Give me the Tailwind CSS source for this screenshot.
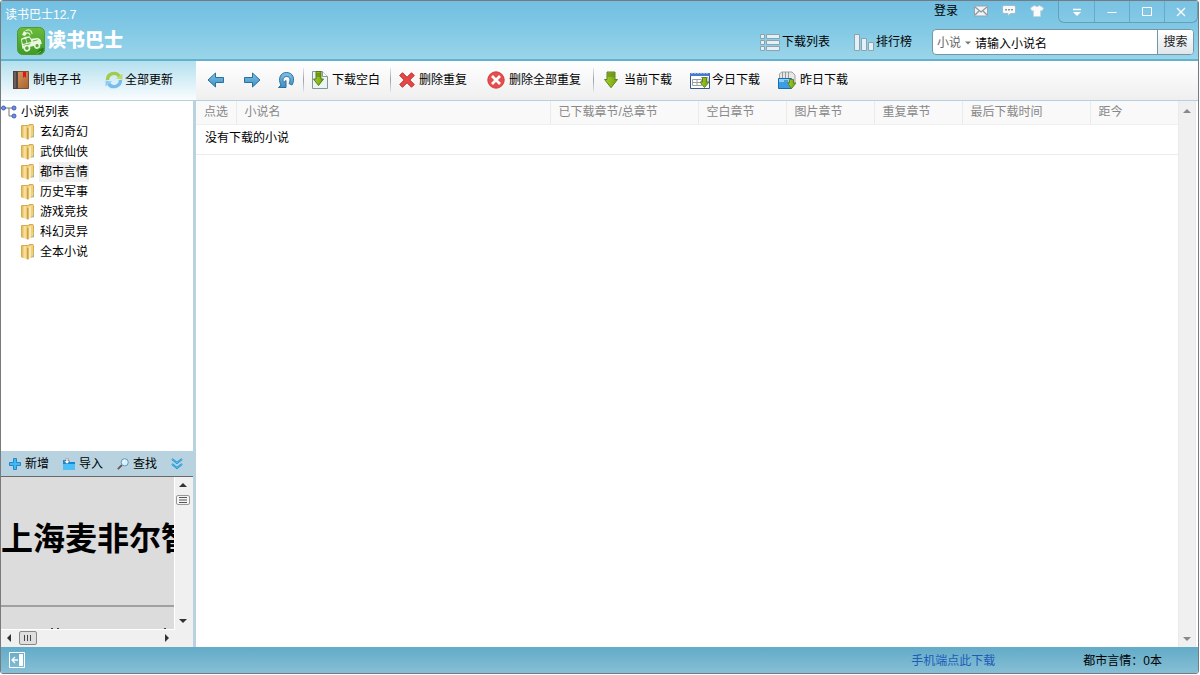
<!DOCTYPE html>
<html lang="zh-CN">
<head>
<meta charset="utf-8">
<title>读书巴士12.7</title>
<script src="https://cdn.jsdelivr.net/npm/@tailwindcss/browser@4"></script>
</head>
<body class="h-screen overflow-hidden bg-white pr-px pb-px font-['Liberation_Sans','Noto_Sans_CJK_SC',sans-serif] text-xs leading-4 text-black">
<!-- shared symbols -->
<svg class="absolute size-0" aria-hidden="true">
  <defs>
    <linearGradient id="blue" x1="0" y1="0" x2="0" y2="1"><stop offset="0" stop-color="#7cc4e6"/><stop offset="1" stop-color="#3f8fc4"/></linearGradient>
    <linearGradient id="green" x1="0" y1="0" x2="1" y2="0"><stop offset="0" stop-color="#a6d02c"/><stop offset="1" stop-color="#74a008"/></linearGradient>
    <linearGradient id="gold" x1="0" y1="0" x2="1" y2="0"><stop offset="0" stop-color="#e3b95e"/><stop offset=".5" stop-color="#fbe7a5"/><stop offset="1" stop-color="#dfb04e"/></linearGradient>
    <linearGradient id="leather" x1="0" y1="0" x2="1" y2="1"><stop offset="0" stop-color="#d9a067"/><stop offset="1" stop-color="#a9622f"/></linearGradient>
    <linearGradient id="logo" x1="0" y1="0" x2="0" y2="1"><stop offset="0" stop-color="#6cbb3a"/><stop offset="1" stop-color="#3f9a27"/></linearGradient>
    <symbol id="folder" viewBox="0 0 14 16">
      <path d="M.5 1.500h7l.5-1h4l.5 1v11.500h-12z" fill="#efd080" stroke="#d6ab50"/>
      <path d="M1 2h4l2 2v11.500l-6-2z" fill="url(#gold)"/>
      <path d="M7 4l3-2v11l-3 2.500z" fill="#fbe9b0"/>
      <path d="M7 4v11.500" stroke="#b88a2c"/>
      <path d="M12.500 8v5" stroke="#e0b558"/><path d="M12 11h1v2h-1z" fill="#55bfe8"/>
    </symbol>
    <symbol id="down" viewBox="0 0 14 17"><path d="M3 .5h8V8h2.500L7 16.200.5 8H3z" fill="url(#green)" stroke="#5d8420"/><path d="M3.500 2.500h7M3.500 4.500h7" stroke="#5d8420"/></symbol>
  </defs>
</svg>

<div class="flex h-full flex-col overflow-hidden rounded-[3px] border border-[#777b80] bg-white">
  <header class="flex h-15 shrink-0 justify-between border-b-2 border-[#62b1cf] bg-linear-to-b from-[#72bfe2] via-[#82c9e5] to-[#9ad5e9]">
    <div class="flex flex-col pt-1.5 pl-1">
      <h1 class="text-white">读书巴士12.7</h1>
      <div class="flex items-center gap-0.5 pt-1 pl-3">
        <svg class="size-7" viewBox="0 0 28 28"><rect x=".5" y=".5" width="27" height="27" rx="5" fill="url(#logo)" stroke="#4a9c31"/>
          <g fill="none" stroke="#d5efc6" stroke-width="1.200" stroke-linecap="round"><path d="M9 3.500q5-2 6 3M9.500 6q3-.5 3.500 2"/></g>
          <path d="M7 4l3 2-2 3-3-1z" fill="#e9f7df"/>
          <g transform="rotate(-14 14 15)"><path d="M5 9.500q4-1.500 9-.5l1 3 6 .5q3 1 3 4v3H4z" fill="#e9f7df"/>
          <path d="M6 11h3v3.500H6zM10.500 10.800h2.800l.8 3.700h-3.600zM6 16.500h7M16 14.500h5" fill="#55a936" stroke="#55a936" stroke-width=".8"/>
          <circle cx="8.500" cy="20" r="2.600" fill="#55a936" stroke="#e9f7df" stroke-width="1.600"/><circle cx="19" cy="20" r="2.400" fill="#55a936" stroke="#e9f7df" stroke-width="1.600"/></g>
          <path d="M20 27q1-6 7-6-1 6-7 6z" fill="#277c1c"/><path d="M20 27l4-3" stroke="#7cc95a"/></svg>
        <span class="text-[19px] leading-7 font-black text-white">读书巴士</span>
      </div>
    </div>
    <div class="flex flex-col items-end gap-1.5">
      <div class="flex items-start">
        <div class="flex h-5 items-center gap-3.5 pr-3.5">
          <a href="#" class="pr-0.5">登录</a>
          <button aria-label="消息"><svg class="h-3 w-3.5" viewBox="0 0 14 12"><path d="M.5 1h13v10H.5z" fill="#f1f3f4" stroke="#91a6b0"/><path d="M1 2l6 5 6-5M1 10l4-4M13 10L9 6" fill="none" stroke="#8c9aa3" stroke-width="1.300"/></svg></button>
          <button aria-label="反馈"><svg class="h-3 w-3.5" viewBox="0 0 14 12"><path d="M2 .5h10q1.500 0 1.500 1.500v5q0 1.500-1.500 1.500H8.500L6 11.500V8.500H2Q.5 8.500.5 7V2Q.5.5 2 .5z" fill="#f7fafb" stroke="#a5bbc6"/><path d="M3 4h2v1.500H3zM6 4h2v1.500H6zM9 4h2v1.500H9z" fill="#8499a4"/></svg></button>
          <button aria-label="皮肤"><svg class="h-3 w-3.5" viewBox="0 0 14 12"><path d="M4.500.5Q7 3 9.500.5L13.500 3 12 6l-1.500-.5v6h-7v-6L2 6 .5 3z" fill="#fafafa" stroke="#c5d3da" stroke-width=".7"/></svg></button>
        </div>
        <div class="flex h-5.5 divide-x divide-[#68a9c6] overflow-hidden rounded-b-md border border-t-0 border-[#65a0b9] bg-white/5 text-white">
          <button class="flex w-9 items-center justify-center" aria-label="菜单"><svg class="h-3 w-3" viewBox="0 0 12 12"><path d="M2 3.500h8" stroke="#fff" stroke-width="1.500"/><path d="M2 6h8l-4 4z" fill="#fff"/></svg></button>
          <button class="flex w-[35px] items-center justify-center" aria-label="最小化"><svg class="h-3 w-3" viewBox="0 0 12 12"><path d="M1.500 6.500h9" stroke="#fff"/></svg></button>
          <button class="flex w-[35px] items-center justify-center" aria-label="最大化"><svg class="h-3 w-3" viewBox="0 0 12 12"><path d="M1.500 1.500h9v8h-9z" fill="none" stroke="#fff"/></svg></button>
          <button class="flex w-8 items-center justify-center" aria-label="关闭"><svg class="h-3 w-3" viewBox="0 0 12 12"><path d="M2 2l8 8M10 2l-8 8" stroke="#fff" stroke-width="1.300"/></svg></button>
        </div>
      </div>
      <div class="flex items-center pr-1">
        <button class="flex items-center gap-0.5"><svg class="h-4.5 w-5" viewBox="0 0 20 18"><g fill="#e3f0f5" stroke="#8aa3ae"><path d="M.5 1.500h4v4h-4zM6.500 1.500h13v4h-13zM.5 7.500h4v4h-4zM6.500 7.500h13v4h-13zM.5 13.500h4v4h-4zM6.500 13.500h13v4h-13z"/></g></svg><span>下载列表</span></button>
        <button class="flex items-center gap-0.5 pl-6"><svg class="h-4.5 w-5" viewBox="0 0 20 18"><g fill="#e3f0f5" stroke="#8aa3ae"><path d="M.5 1.500h5v16h-5zM7.500 5.500h5v12h-5zM14.500 9.500h5v8h-5z"/></g></svg><span>排行榜</span></button>
        <form class="ml-5 flex h-6.5 overflow-hidden rounded border border-[#7397a6] bg-white">
          <div class="flex items-center pt-0.5 pl-1">
            <select aria-label="类别" class="h-5 w-7 appearance-none bg-transparent text-[#666]"><option>小说</option></select>
            <svg class="h-1 w-1.5" viewBox="0 0 6 4"><path d="M0 .5h6l-3 3z" fill="#777"/></svg>
          </div>
          <input aria-label="小说名" value="请输入小说名" class="ml-1 w-45.5 bg-transparent pt-1 outline-none">
          <button type="button" class="w-9 border-l border-[#7397a6] bg-linear-to-b from-white to-[#dfe6eb] text-[#222]">搜索</button>
        </form>
      </div>
    </div>
  </header>

  <nav class="flex h-10 shrink-0 border-b border-[#b5d0df]">
    <div class="flex w-[195px] shrink-0 items-center bg-linear-to-b from-[#b3e0ee] to-[#fafdff] pb-0.5 pl-3">
      <button class="flex items-center gap-1"><svg class="h-4.5 w-4" viewBox="0 0 16 18"><path d="M.5.5h15v17H.5z" fill="url(#leather)" stroke="#80502c"/><path d="M0 0h5v18H0z" fill="#51443f"/><path d="M2 1v16" stroke="#8c7d75"/><path d="M10 1h3v6l-1.500-1.500L10 7z" fill="#e0161c"/></svg><span>制电子书</span></button>
      <button class="ml-6 flex items-center gap-0.5"><svg class="h-4.5 w-4.5" viewBox="0 0 18 18"><g fill="none" stroke-width="3.400"><path d="M2.500 9A6.500 6.500 0 0 1 14.500 5.500" stroke="#a3ca48"/><path d="M15.500 9A6.500 6.500 0 0 1 3.500 12.500" stroke="#78bcef"/></g><path d="M11 7.500l6.500-5v6z" fill="#b9dc70"/><path d="M7 10.500l-6.500 5v-6z" fill="#8fcbf5"/></svg><span>全部更新</span></button>
    </div>
    <div class="flex min-w-0 grow items-center bg-linear-to-b from-white to-[#efefef] pb-0.5 pl-[11px]">
      <button aria-label="后退"><svg class="h-4.5 w-4.5" viewBox="0 0 18 18"><path d="M8.500 2v4.500h8v5h-8V16L1 9z" fill="url(#blue)" stroke="#2b6f9f"/></svg></button>
      <button class="ml-4.5" aria-label="前进"><svg class="h-4.5 w-4.5" viewBox="0 0 18 18"><path d="M9.500 2v4.500h-8v5h8V16L17 9z" fill="url(#blue)" stroke="#2b6f9f"/></svg></button>
      <button class="ml-4" aria-label="刷新"><svg class="h-4.5 w-4.5" viewBox="0 0 18 18"><path d="M1.500 16.500h7.500V9.500L6.800 11.500C5 8.500 6.500 5.500 9.500 5.500c3.500 0 4.500 3.500 2.500 7l3 1.500C18.500 8 16 1.500 9.500 1.500 3 1.500.8 8.500 4 14z" fill="url(#blue)" stroke="#2b6f9f"/></svg></button>
      <span class="ml-2 h-6 w-px bg-linear-to-b from-gray-200 via-gray-400 to-gray-200"></span>
      <button class="ml-2 flex items-center gap-1"><svg class="h-4.5 w-4" viewBox="0 0 16 18"><path d="M.5.5h10l5 5v12H.5z" fill="#edf4f4" stroke="#7e9a9b"/><path d="M10.500.5v5h5" fill="#fff" stroke="#7e9a9b"/><path d="M4 .5h5V8h2.500l-5 6.500L1.500 8H4z" fill="url(#green)" stroke="#557b16"/><path d="M4 3h5M4 5h5" stroke="#557b16"/></svg><span>下载空白</span></button>
      <span class="ml-2.5 h-6 w-px bg-linear-to-b from-gray-200 via-gray-400 to-gray-200"></span>
      <button class="ml-2 flex items-center gap-1"><svg class="size-4" viewBox="0 0 16 16"><path d="M3.500.7L8 5.200 12.500.7l2.800 2.800L10.800 8l4.500 4.500-2.800 2.800L8 10.800l-4.500 4.500L.7 12.500 5.200 8 .7 3.500z" fill="#e14848" stroke="#c53335" stroke-linejoin="round"/></svg><span>删除重复</span></button>
      <button class="ml-5 flex items-center gap-1"><svg class="size-4.5" viewBox="0 0 18 18"><circle cx="9" cy="9" r="8.200" fill="#e64e4e" stroke="#cc4444"/><path d="M5 5l8 8M13 5l-8 8" stroke="#fff" stroke-width="2.600"/></svg><span>删除全部重复</span></button>
      <span class="ml-3 h-6 w-px bg-linear-to-b from-gray-200 via-gray-400 to-gray-200"></span>
      <button class="ml-2.5 flex items-center gap-1.5"><svg class="h-4.5 w-3.5"><use href="#down"/></svg><span>当前下载</span></button>
      <button class="ml-4.5 flex items-center gap-0.5"><svg class="h-4.5 w-5" viewBox="0 0 20 18"><path d="M.5 2.500h19v15H.5z" fill="#fff" stroke="#35598f"/><path d="M0 2h20v3H0z" fill="#4678cb"/><path d="M2 1v2M5 1v2M8 1v2M11 1v2M14 1v2M17 1v2" stroke="#dfe9f6"/><path d="M2.500 8.500h9v6h-9zM2.500 11.500h9M7 8.500v6M11 6.500h7v5" fill="none" stroke="#9aa1a6"/><path d="M12.500 6.500h4V11h2.500l-4.500 5.500L10 11h2.500z" fill="url(#green)" stroke="#5d8420"/></svg><span>今日下载</span></button>
      <button class="ml-4.5 flex items-center gap-1"><svg class="h-4.5 w-4.5" viewBox="0 0 18 18"><path d="M1.500 8V3l2-2H14l3 3v9H1.500z" fill="#e7e7e7" stroke="#a3a3a3"/><path d="M4.500 1v6M7.500 1v6M10.500 1v6" stroke="#999"/><path d="M.5 7.500h13v10H.5z" fill="#3b9de4" stroke="#176bb0"/><path d="M1 8h13v3H1z" fill="#8dd0fa"/><path d="M6 10h4" stroke="#176bb0"/><path d="M11.500 8.500h4V12H18l-4.500 5.500L9.500 12h2z" fill="url(#green)" stroke="#5d8420"/></svg><span>昨日下载</span></button>
    </div>
  </nav>

  <div class="flex min-h-0 grow">
    <aside class="flex w-[195px] shrink-0 flex-col border-r-3 border-[#b8d3df]">
      <div class="min-h-0 grow pt-0.5">
        <div class="flex items-center gap-1 leading-4.5"><svg class="h-3.5 w-4" viewBox="0 0 16 14"><path d="M4 3h8M8 3v8h4" fill="none" stroke="#777"/><g fill="#7292df" stroke="#3f5db5"><circle cx="2.500" cy="3" r="2"/><circle cx="13" cy="3" r="2"/><circle cx="13" cy="11" r="2"/></g></svg><span>小说列表</span></div>
        <ul class="pt-px pl-5 leading-5">
          <li><a href="#" class="flex items-center gap-1"><svg class="h-4 w-3.5"><use href="#folder"/></svg><span class="px-px">玄幻奇幻</span></a></li>
          <li><a href="#" class="flex items-center gap-1"><svg class="h-4 w-3.5"><use href="#folder"/></svg><span class="px-px">武侠仙侠</span></a></li>
          <li><a href="#" class="flex items-center gap-1"><svg class="h-4 w-3.5"><use href="#folder"/></svg><span class="bg-[#efefef] px-px">都市言情</span></a></li>
          <li><a href="#" class="flex items-center gap-1"><svg class="h-4 w-3.5"><use href="#folder"/></svg><span class="px-px">历史军事</span></a></li>
          <li><a href="#" class="flex items-center gap-1"><svg class="h-4 w-3.5"><use href="#folder"/></svg><span class="px-px">游戏竞技</span></a></li>
          <li><a href="#" class="flex items-center gap-1"><svg class="h-4 w-3.5"><use href="#folder"/></svg><span class="px-px">科幻灵异</span></a></li>
          <li><a href="#" class="flex items-center gap-1"><svg class="h-4 w-3.5"><use href="#folder"/></svg><span class="px-px">全本小说</span></a></li>
        </ul>
      </div>
      <div class="flex h-[25px] shrink-0 items-center bg-[#b8d3df] pl-2">
        <button class="flex items-center gap-1"><svg class="size-3" viewBox="0 0 12 12"><path d="M4.500.5h3v4h4v3h-4v4h-3v-4h-4v-3h4z" fill="#40b8f2" stroke="#2586ca"/></svg><span>新增</span></button>
        <button class="ml-3.5 flex items-center gap-1"><svg class="size-3" viewBox="0 0 12 12"><path d="M0 2h5l1 2h6v8H0z" fill="#1688d6"/><path d="M0 6h12v6H0z" fill="#4dbef7"/><path d="M3 0h2v3h2L4 6 1 3h2z" fill="#fff" stroke="#607c8c" stroke-width=".6"/></svg><span>导入</span></button>
        <button class="ml-3.5 flex items-center gap-1"><svg class="size-3" viewBox="0 0 12 12"><path d="M.8 11.200L5 7" stroke="#6b5954" stroke-width="1.800"/><circle cx="7.700" cy="4.300" r="3.600" fill="#d8f0fc" stroke="#6197bb"/><path d="M6 4l2-2" stroke="#fff"/></svg><span>查找</span></button>
        <button class="ml-3.5" aria-label="更多"><svg class="size-3" viewBox="0 0 12 12"><path d="M1 1l5 4 5-4M1 6l5 4 5-4" fill="none" stroke="#168bd0" stroke-width="2"/><path d="M1 1l5 4 5-4M1 6l5 4 5-4" fill="none" stroke="#5cccf9" stroke-width=".8"/></svg></button>
      </div>
      <div class="grid h-[171px] shrink-0 grid-cols-[1fr_16px] grid-rows-[1fr_18px] border-t border-[#696969] bg-[#f0f0f0] pr-0.5">
        <div class="flex min-w-0 flex-col overflow-hidden border-r border-white bg-[#dcdcdc]">
          <p class="h-[130px] shrink-0 border-b-2 border-[#a0a0a0] pt-11 text-[32px] leading-9 font-bold whitespace-nowrap">上海麦非尔智</p>
          <div class="flex grow items-end gap-1 pl-12.5"><i class="h-px w-0.5 bg-[#444]"></i><i class="h-px w-0.5 bg-[#444]"></i><i class="mr-2 ml-auto h-px w-0.5 bg-[#444]"></i></div>
        </div>
        <div class="flex flex-col items-center justify-between bg-[#f0f0f0] py-1.5">
          <div class="flex flex-col items-center gap-2">
            <svg class="h-1 w-2" viewBox="0 0 8 4"><path d="M0 4l4-4 4 4z" fill="#333"/></svg>
            <svg class="h-2.5 w-3.5" viewBox="0 0 14 10"><rect x=".5" y=".5" width="13" height="9" rx="1.500" fill="#f5f5f5" stroke="#999"/><path d="M3 2.500h8M3 5h8M3 7.500h8" stroke="#555"/></svg>
          </div>
          <svg class="h-1 w-2" viewBox="0 0 8 4"><path d="M0 0h8l-4 4z" fill="#333"/></svg>
        </div>
        <div class="flex items-center justify-between border-t border-white pr-1.5 pb-0.5 pl-1.5">
          <div class="flex items-center gap-2">
            <svg class="h-2 w-1" viewBox="0 0 4 8"><path d="M4 0v8L0 4z" fill="#333"/></svg>
            <svg class="h-3.5 w-4.5" viewBox="0 0 18 14"><rect x=".5" y=".5" width="17" height="13" rx="1.500" fill="#dedede" stroke="#888"/><path d="M5.500 4v6M8.500 4v6M11.500 4v6" stroke="#444"/></svg>
          </div>
          <svg class="h-2 w-1" viewBox="0 0 4 8"><path d="M0 0v8l4-4z" fill="#333"/></svg>
        </div>
      </div>
    </aside>

    <main class="flex min-w-0 grow">
      <div class="min-w-0 grow">
        <table class="w-full table-fixed border-collapse text-left">
          <colgroup><col class="w-10"><col><col class="w-[148px]"><col class="w-[88px]"><col class="w-[88px]"><col class="w-[88px]"><col class="w-32"><col class="w-[88px]"></colgroup>
          <thead class="bg-[#f9f9f9] text-[#888]">
            <tr class="h-[23px] border-b border-[#f0f0f0]">
              <th class="border-r border-[#ebebeb] pl-2 font-normal">点选</th>
              <th class="border-r border-[#ebebeb] pl-2 font-normal">小说名</th>
              <th class="border-r border-[#ebebeb] pl-2 font-normal">已下载章节/总章节</th>
              <th class="border-r border-[#ebebeb] pl-2 font-normal">空白章节</th>
              <th class="border-r border-[#ebebeb] pl-2 font-normal">图片章节</th>
              <th class="border-r border-[#ebebeb] pl-2 font-normal">重复章节</th>
              <th class="border-r border-[#ebebeb] pl-2 font-normal">最后下载时间</th>
              <th class="pl-2 font-normal">距今</th>
            </tr>
          </thead>
          <tbody><tr class="h-[30px] border-b border-[#ececec]"><td colspan="8" class="pb-0.5 pl-[9px]">没有下载的小说</td></tr></tbody>
        </table>
      </div>
      <div class="mr-0.5 flex w-[18px] shrink-0 flex-col items-center justify-between border-x border-[#eaeaea] bg-[#f0f0f0] pt-2 pb-1.5">
        <svg class="h-1 w-2" viewBox="0 0 8 4"><path d="M0 4l4-4 4 4z" fill="#888"/></svg>
        <svg class="h-1 w-2" viewBox="0 0 8 4"><path d="M0 0h8l-4 4z" fill="#888"/></svg>
      </div>
    </main>
  </div>

  <footer class="flex h-6.5 shrink-0 items-center bg-linear-to-b from-[#62abc8] to-[#86bfd5] pr-9 pl-2">
    <button aria-label="收起侧栏"><svg class="size-4" viewBox="0 0 16 16"><path d="M.5.5h15v15H.5z" fill="none" stroke="#fff"/><path d="M10 2h4v12h-4z" fill="#fff"/><path d="M3 8h6M6 5L3 8l3 3" fill="none" stroke="#fff" stroke-width="1.300"/></svg></button>
    <a href="#" class="mr-22 ml-auto pt-0.5 text-[#1f5bb8]">手机端点此下载</a>
    <span class="pt-0.5">都市言情：0本</span>
  </footer>
</div>
</body>
</html>
